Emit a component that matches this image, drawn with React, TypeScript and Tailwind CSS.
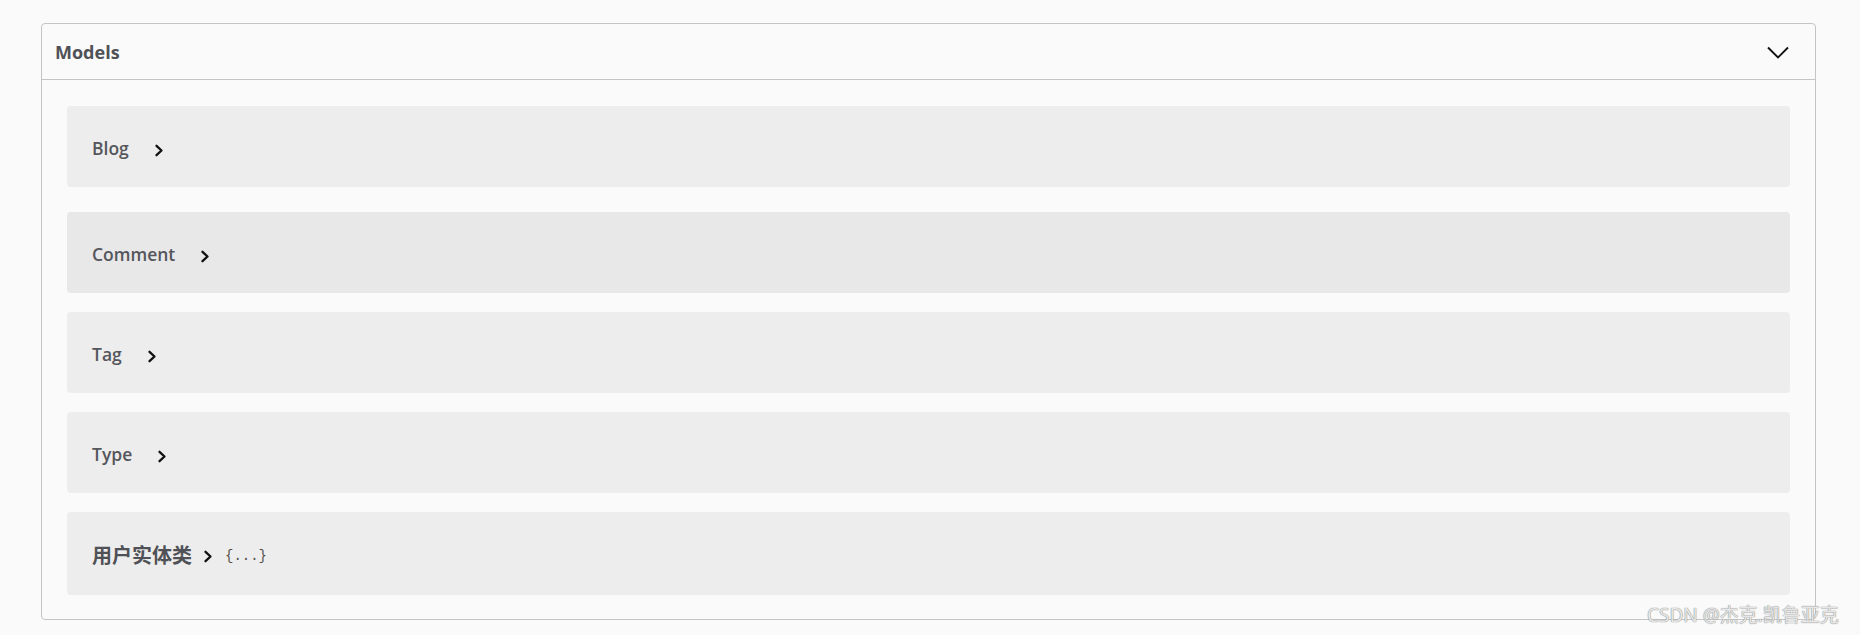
import React from "react";

const Chev = () => (
  <svg width="10" height="13" viewBox="0 0 10 13" className="shrink-0">
    <path d="M2.5 1.8 L7.5 6.5 L2.5 11.2" fill="none" stroke="#111" strokeWidth="2.3" strokeLinecap="round" strokeLinejoin="round" />
  </svg>
);

type Row = { name: string; mb: string; bg: string; h: string; cjk?: boolean };

const rows: Row[] = [
  { name: "Blog", mb: "mb-[25px]", bg: "bg-[#ededed]", h: "h-[81px]" },
  { name: "Comment", mb: "mb-[19px]", bg: "bg-[#e8e8e8]", h: "h-[81px]" },
  { name: "Tag", mb: "mb-[19px]", bg: "bg-[#ededed]", h: "h-[81px]" },
  { name: "Type", mb: "mb-[19px]", bg: "bg-[#ededed]", h: "h-[81px]" },
  { name: "用户实体类", mb: "mb-0", bg: "bg-[#ededed]", h: "h-[83px]", cjk: true },
];

export default function App() {
  return (
    <div
      className="relative min-h-[635px] w-[1860px] bg-[#fafafa] pt-[23px] pl-[41px] pr-[44px]"
      style={{ fontFamily: '"Open Sans", "Noto Sans CJK SC", sans-serif' }}
    >
      <div className="rounded-[4px] border border-[#c4c4c4] bg-[#fafafa]">
        <div className="flex h-[56px] items-center justify-between border-b border-[#c4c4c4] pl-[13px] pr-[26px]">
          <span className="mt-[2px] text-[18px] font-bold text-[#505156]">Models</span>
          <svg width="22" height="13" viewBox="0 0 22 13" className="mt-[1px]">
            <path d="M1 1.5 L11 11.5 L21 1.5" fill="none" stroke="#111" strokeWidth="1.9" />
          </svg>
        </div>
        <div className="px-[25px] pt-[26px] pb-[24px]">
          {rows.map((r) => (
            <div key={r.name} className={`flex items-center rounded-[4px] pl-[25px] ${r.bg} ${r.h} ${r.mb}`}>
              {r.cjk ? (
                <>
                  <span
                    className="mt-[2px] text-[20px] font-bold text-[#505156]"
                    style={{ fontFamily: '"Noto Sans CJK SC", sans-serif' }}
                  >
                    {r.name}
                  </span>
                  <span className="ml-[11px] mt-[5px]">
                    <Chev />
                  </span>
                  <span
                    className="ml-[12px] mt-[6px] text-[14px] text-[#55504a]"
                    style={{ fontFamily: '"Liberation Mono", monospace' }}
                  >
                    {"{...}"}
                  </span>
                </>
              ) : (
                <>
                  <span className="mt-[3px] text-[17.5px] font-semibold text-[#55565b]">{r.name}</span>
                  <span className="ml-[25px] mt-[7px]">
                    <Chev />
                  </span>
                </>
              )}
            </div>
          ))}
        </div>
      </div>
      <div
        className="absolute left-[1647px] top-[603px] text-[19px] leading-[24px] whitespace-nowrap text-[#e6e6e6] [text-shadow:0_0_1px_#8c8c8c,0_0_1px_#8c8c8c]"
        style={{ fontFamily: '"Noto Sans", "Noto Sans CJK SC", sans-serif' }}
      >
        CSDN @杰克.凯鲁亚克
      </div>
    </div>
  );
}
